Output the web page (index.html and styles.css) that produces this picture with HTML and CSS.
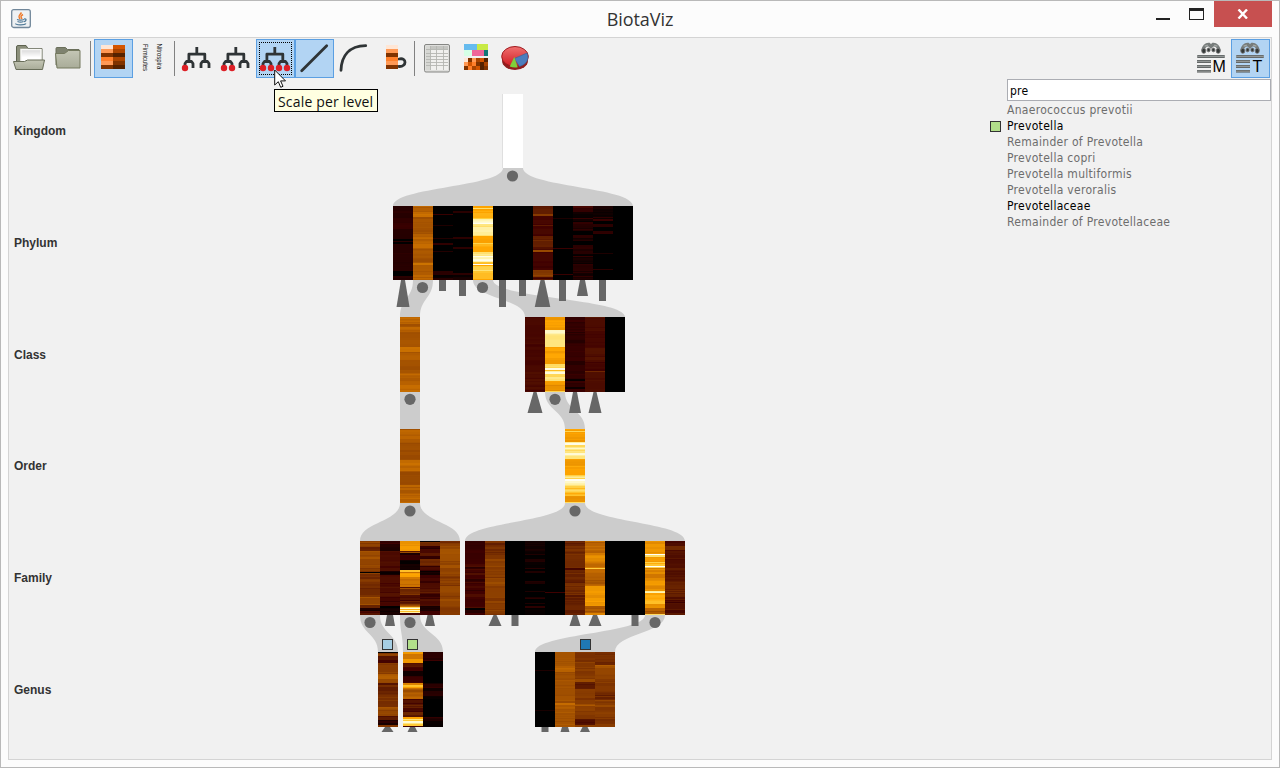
FILE: index.html
```html
<!DOCTYPE html>
<html lang="en">
<head>
<meta charset="utf-8">
<title>BiotaViz</title>
<link rel="stylesheet" href="styles.css">
</head>
<body>
<svg width="0" height="0" class="defs">
  <defs>
    <linearGradient id="olive" x1="0" y1="0" x2="0" y2="1"><stop offset="0" stop-color="#c4c6b5"/><stop offset="1" stop-color="#a9ac99"/></linearGradient>
    <linearGradient id="paper" x1="0" y1="0" x2="0" y2="1"><stop offset="0" stop-color="#d8d8d8"/><stop offset=".6" stop-color="#fff"/></linearGradient>
    <linearGradient id="bar" x1="0" y1="0" x2="0" y2="1"><stop offset="0" stop-color="#555a5a"/><stop offset=".5" stop-color="#929695"/><stop offset="1" stop-color="#4c5050"/></linearGradient>
    <linearGradient id="pie" x1="0" y1="0" x2="0" y2="1"><stop offset="0" stop-color="#f07070"/><stop offset="1" stop-color="#d01c22"/></linearGradient>
    <g id="tree" fill="none" stroke="#2f3436" stroke-width="2.8" stroke-linejoin="round">
      <path d="M18.8 8v7M10.900 22.500v-7.300h15.900v7.300M7 29v-4.500l1.500-2h5l1.500 2v4.500M23 29v-4.500l1.500-2h5l1.500 2v4.500"/>
    </g>
    <g id="binoculars">
      <g transform="translate(3.800 .5) scale(.8 .95)">
        <path d="M8.500 12c1-4 4-7 8-6.600l2.500 2 2.500-2c4-.4 7 2.600 8 6.600" fill="none" stroke="#777c7b" stroke-width="4"/>
        <path d="M11 7l4-1M23 6l4 1" stroke="#a4a8a5" stroke-width="1.500"/>
        <circle cx="10" cy="12" r="2.600" fill="#333837" stroke="#777"/><circle cx="16" cy="11" r="2" fill="#333837" stroke="#777"/>
        <circle cx="22" cy="11" r="2" fill="#333837" stroke="#777"/><circle cx="28" cy="12" r="2.600" fill="#333837" stroke="#777"/>
      </g>
      <rect x="5" y="16" width="28" height="3" rx="1" fill="url(#bar)"/>
      <rect x="5" y="21" width="14" height="3" fill="url(#bar)"/><rect x="5" y="26" width="14" height="3" fill="url(#bar)"/><rect x="5" y="31" width="14" height="2.500" fill="url(#bar)"/>
    </g>
  </defs>
</svg>
<div class="window">
  <header class="titlebar">
    <svg class="app-icon" width="20" height="20" viewBox="0 0 20 20">
      <rect x=".7" y=".7" width="18.600" height="17.800" rx="2" fill="#eef1f3" stroke="#71879a" stroke-width="1.300"/>
      <path d="M10.500 3.500c-1.500 2.500-4 3-1.500 6.500M12 5.500c-2.500 1.500-2.500 2-1 4.500" fill="none" stroke="#ee7b2d" stroke-width="1.500"/>
      <path d="M6 10.500c2 .8 5 .8 7 0M13 10c3-.5 2.500 2 0 2.800M6.500 12.500c2 .8 4 .8 6 0M4.500 14.500c0 1.500 9 2 10.500 0" fill="none" stroke="#4e7896" stroke-width="1.200"/>
    </svg>
    <h1 class="title">BiotaViz</h1>
    <div class="controls">
      <svg width="15" height="18" viewBox="0 0 15 18"><rect x="1" y="16" width="14" height="2" fill="#222"/></svg>
      <svg class="maximize" width="15" height="13" viewBox="0 0 15 13"><path d="M0 0h15v12H0zM1 3v8h13V3z" fill="#222" fill-rule="evenodd"/></svg>
      <div class="close"><svg width="12" height="10" viewBox="0 0 12 10"><path d="M1.500.5l8.500 9M10 .5l-8.500 9" stroke="#fff" stroke-width="2.400"/></svg></div>
    </div>
  </header>

  <main class="frame">
    <nav class="toolbar">
      <div class="tool"><svg viewBox="0 0 39 39">
        <path d="M7.500 24V8q0-1.500 1.500-1.500h8l2 3h14V24z" fill="#8b8f7b" stroke="#5d624f"/>
        <rect x="12" y="10.500" width="20" height="13" fill="url(#paper)" stroke="#f8f8f6" stroke-width="1.500"/>
        <path d="M4.500 22.500h11l3-1.500h17l-2 9.500H7z" fill="url(#olive)" stroke="#686d59" stroke-linejoin="round"/>
      </svg></div>
      <div class="tool"><svg viewBox="0 0 39 39">
        <path d="M8 26V9.500q0-1 1-1h8.500l2 2H31V27z" fill="#7e826f" stroke="#6a6f5b"/>
        <path d="M7.500 14.500h9l4-3h11.500v17.500h-23z" fill="url(#olive)" stroke="#74795f" stroke-linejoin="round"/>
      </svg></div>
      <i class="sep wide"></i>
      <div class="tool on"><svg id="heat-icon" viewBox="0 0 39 39" shape-rendering="crispEdges"></svg></div>
      <div class="tool"><svg viewBox="0 0 39 39">
        <text class="tiny" transform="translate(9.700 5) rotate(90)" textLength="27" lengthAdjust="spacingAndGlyphs">Firmicutes</text>
        <text class="tiny" transform="translate(23.700 4.500) rotate(90)" textLength="26" lengthAdjust="spacingAndGlyphs">Nitrospira</text>
      </svg></div>
      <i class="sep"></i>
      <div class="tool"><svg viewBox="0 0 39 39"><use href="#tree"/><circle cx="7" cy="29" r="3.200" class="red"/></svg></div>
      <div class="tool"><svg viewBox="0 0 39 39"><use href="#tree"/><circle cx="7" cy="29" r="3.200" class="red"/><circle cx="15" cy="29" r="3.200" class="red"/></svg></div>
      <div class="tool on"><svg viewBox="0 0 39 39"><use href="#tree"/><circle cx="7" cy="29" r="3.200" class="red"/><circle cx="15" cy="29" r="3.200" class="red"/><circle cx="23" cy="29" r="3.200" class="red"/><circle cx="31" cy="29" r="3.200" class="red"/>
        <path d="M3 3.500h33M3 35.500h33M3.500 5v30M35.500 5v30" fill="none" stroke="#000" stroke-dasharray="1 1" shape-rendering="crispEdges"/></svg></div>
      <div class="tool on"><svg viewBox="0 0 39 39"><path d="M6.700 31.700l25-25" class="ink"/></svg></div>
      <div class="tool"><svg viewBox="0 0 39 39"><path d="M7 31.300C7.500 17 15 7 31.700 6.700" class="ink"/></svg></div>
      <div class="tool"><svg id="mug-icon" viewBox="0 0 39 39"><path d="M26 20c8-2 8 8 0 7.500" class="ink"/></svg></div>
      <i class="sep"></i>
      <div class="tool"><svg viewBox="0 0 39 39">
        <rect x="6.500" y="5.500" width="25" height="27.500" rx="1.500" fill="#dededc" stroke="#858683"/>
        <rect x="8" y="7" width="22" height="24" fill="#f0f0ee"/><rect x="8" y="7" width="22" height="3.500" fill="#c4c5c1"/><rect x="8" y="7" width="4.500" height="24" fill="#d6d7d3"/>
        <path d="M8 10.500h22M8 14.500h22M8 17.500h22M8 20.500h22M8 23.500h22M8 26.500h22M12.500 7v24M18.500 7v24M25.500 7v24" stroke="#b4b5b1" stroke-width=".9"/>
      </svg></div>
      <div class="tool"><svg id="mosaic-icon" viewBox="0 0 39 39" shape-rendering="crispEdges"></svg></div>
      <div class="tool"><svg viewBox="0 0 39 39">
        <ellipse cx="19" cy="21.500" rx="13" ry="9.500" fill="#8f1e1e"/>
        <ellipse cx="19" cy="17.500" rx="13.300" ry="10" fill="url(#pie)" stroke="#a01a1e"/>
        <path d="M18.300 19.500L31 14c2.500 6 0 11-7.500 13.500z" fill="#4c7dbd" stroke="#375f96" stroke-width=".6"/>
        <path d="M18.300 18l3.400 10.200q-4 .8-8-.6z" fill="#7fd03a"/>
      </svg></div>
      <div class="tool first-right"><svg viewBox="0 0 39 39"><use href="#binoculars"/><text class="letter" x="20.500" y="33" textLength="12.500">M</text></svg></div>
      <div class="tool on"><svg viewBox="0 0 39 39"><use href="#binoculars"/><text class="letter" x="21.500" y="33">T</text></svg></div>
    </nav>

    <div class="pointer-layer">
      <span class="tooltip">Scale per level</span>
      <svg class="cursor" width="13" height="20" viewBox="0 0 13 20"><path d="M.7 1v15l3.600-3.300 2.400 5.600 2.300-1-2.400-5.400h4.900z" fill="#fff" stroke="#111" stroke-width="1"/></svg>
    </div>

    <section class="workspace">
      <div class="levels"><span>Kingdom</span><span>Phylum</span><span>Class</span><span>Order</span><span>Family</span><span>Genus</span></div>
      <svg id="tree-map" width="340" height="680" viewBox="350 79 340 680"></svg>
      <aside class="search">
        <input class="query" value="pre">
        <ul class="results">
          <li>Anaerococcus prevotii</li>
          <li class="match marked">Prevotella</li>
          <li>Remainder of Prevotella</li>
          <li>Prevotella copri</li>
          <li>Prevotella multiformis</li>
          <li>Prevotella veroralis</li>
          <li class="match">Prevotellaceae</li>
          <li>Remainder of Prevotellaceae</li>
        </ul>
      </aside>
    </section>
  </main>
</div>
<script src="chart.js"></script>
</body>
</html>
```
FILE: styles.css
```css
*, ::before { box-sizing: border-box; }
body { margin: 0; overflow: hidden; }
.defs { position: absolute; }
.window { width: 1280px; height: 768px; border: 1px solid #b9b9b9; background: #fcfcfc; padding: 0 7px 7px; display: flex; flex-direction: column; }
.titlebar { height: 36px; flex: none; display: grid; grid-template-columns: 1fr auto 1fr; align-items: start; }
.app-icon { margin: 8px 0 0 3px; }
.title { margin: 5px 0 0; font: 400 18px/27px "Open Sans", sans-serif; letter-spacing: -.05px; color: #333; }
.controls { display: flex; justify-content: flex-end; align-items: flex-start; margin-right: 0; }
.controls .maximize { margin: 7px 10px 0 19px; }
.controls > svg:first-child { margin-top: 1px; }
.close { width: 58px; height: 26px; background: #c75050; display: flex; justify-content: center; align-items: center; }
.frame { flex: 1; border: 1px solid #d4d4d4; background: #f1f1f1; position: relative; display: flex; flex-direction: column; }
.toolbar { display: flex; height: 41px; padding: 1px 1px 0 1px; flex: none; }
.tool { width: 39px; height: 39px; flex: none; }
.tool:first-child { margin-left: -1px; }
.tool svg { display: block; width: 39px; height: 39px; }
.tool.on { background: #b2d4f3; box-shadow: inset 0 0 0 1px #5b9fe2; }
.first-right { margin-left: auto; }
.sep { width: 6px; height: 35px; margin-top: 2px; flex: none; background: linear-gradient(#818181, #818181) 2px 0 / 1px 100% no-repeat; }
.sep.wide { width: 7px; background-position: 3px 0; }
.red { fill: #dd1f26; }
.ink { fill: none; stroke: #2f3436; stroke-width: 2.8; stroke-linecap: round; }
.tiny { font: 6.5px "Liberation Sans", sans-serif; fill: #111; }
.letter { font: 16px "Liberation Sans", sans-serif; fill: #000; }
.pointer-layer { position: absolute; left: 265px; top: 31px; z-index: 2; }
.tooltip { position: absolute; left: 0; top: 20px; width: 104px; height: 23px; border: 1px solid #000; background: #ffffe1; font: 14px/24px "Open Sans", sans-serif; letter-spacing: .17px; white-space: nowrap; padding-left: 3px; color: #111; }
.cursor { position: absolute; left: 0; top: 0; }
.workspace { flex: 1; display: flex; min-height: 0; }
.levels { width: 341px; padding: 0 0 0 5px; flex: none; font: bold 12px/104px "Liberation Sans", sans-serif; color: #333; display: grid; grid-template-rows: repeat(6, 111.8px); }
#tree-map { flex: none; display: block; }
.search { width: 281px; margin-left: auto; padding-left: 17px; font: 12px "DejaVu Sans Condensed", "DejaVu Sans", sans-serif; font-stretch: condensed; letter-spacing: .3px; }
.query { display: block; width: 264px; height: 22px; border: 1px solid #abadb3; background: #fff; padding: 1px 2px 0; font: inherit; letter-spacing: .2px; color: #000; outline: none; }
.results { list-style: none; margin: 1px 0 0; padding: 0; color: #6d6d6d; line-height: 16px; }
.match { color: #000; }
.marked { display: flex; align-items: center; margin-left: -17px; }
.marked::before { content: ""; width: 11px; height: 11px; margin-right: 6px; border: 1px solid #333; background: #b2df8a; }
```
FILE: chart.js
```javascript
const NS = "http://www.w3.org/2000/svg";
function add(parent, tag, attrs) {
  const el = document.createElementNS(NS, tag);
  for (const k in attrs) el.setAttribute(k, attrs[k]);
  parent.appendChild(el);
}

/* Heat ramp: 0 is absent, 12 is the most abundant. */
const ramp = [[0,0,0],[36,0,0],[64,0,0],[88,22,0],[122,48,0],[156,76,0],[200,110,0],[234,146,0],[255,165,0],[255,205,60],[255,229,125],[255,246,185],[255,255,250]];
function heat(v) {
  const i = Math.min(11, Math.floor(v)), t = Math.min(1, v - i);
  return `rgb(${ramp[i].map((c, k) => Math.round(c + (ramp[i + 1][k] - c) * t)).join()})`;
}

/* Column: "end:low-high ..." gives the value range of the samples down to row `end`. */
const groups = [
  { x: 393, y: 206, h: 74, cols: [
    "5:1-1.1 7:1.2-1.4 12:1-1.1 17:1.2-1.5 23:1.6-1.8 33:1-1.1 35:0-0 36:1.2-1.3 38:0-0 47:1-1.2 54:1-1.4 65:1-1.2 70:0-0 74:.6-1.5",
    "8:5.2-6 11:6-6.2 28:5-5.5 32:5.4-5.9 42:5-6 57:5-5.6 59:6-6.3 66:5.1-5.6 74:5-6.1",
    "8:0-0 9:1.6-1.7 19:0-0 20:.8-.9 32:0-0 33:.8-1 37:0-0 39:1.4-1.5 45:0-0 46:.9-1 65:0-0 69:1-1.4 72:0-.7 74:1-1.2",
    "5:0-0 7:1-1.3 31:0-0 33:1.1-1.4 41:0-0 43:1.2-1.3 67:0-0 69:1.1-1.4 71:0-.5 74:.5-1.5",
    "2:7.8-8 3:9-10 12:7.5-8.5 13:9-9 18:10.5-12 21:9.5-10.5 24:10-11.8 30:9.6-11 37:7.5-8.2 38:9-9.5 46:7.6-8.5 50:9.5-11 56:10.5-12 58:8-9 59:12-12 60:8-8 65:8.5-10.5 67:8-9 74:7.4-8.7",
    "74:0-0", "74:0-0",
    "3:3-3.5 8:3.1-3.7 10:4.2-4.5 19:1.7-2.7 20:3-3.5 30:1.8-2.4 35:3-4 43:2.1-3.4 44:2.3-2.5 46:4.4-5.2 64:1.7-2.5 71:3.5-4.8 74:2-3.2",
    "12:0-0 13:.7-.8 42:0-0 43:1.7-1.8 68:0-0 69:1.7-1.8 74:0-0",
    "2:2-2.4 6:1.3-1.6 12:0-.5 13:1.6-1.7 16:0-.6 18:1-1.7 25:.4-1.5 29:0-0 32:1-1.4 35:.3-1.2 39:0-0 43:1-1.6 48:0-1.4 50:.1-.3 51:1.5-1.6 58:0-.9 65:1-1.4 74:.1-1.5",
    "11:0-.8 12:1.2-1.5 13:.3-.4 15:1.5-1.8 18:0-0 21:1.2-1.6 25:0-0 28:1-1.7 47:0-0 48:.8-.9 63:0-0 64:1.2-1.4 74:0-0", "74:0-0"] },
  { x: 400, y: 317, h: 75, cols: ["7:5.4-6.1 15:5-6 30:5-5.5 35:6-6.2 43:5.2-5.8 56:5-5.4 67:5.2-5.9 75:5.6-6.2"] },
  { x: 525, y: 317, h: 75, cols: [
    "8:2-3 28:2-2.5 55:2-2.5 75:2-3",
    "3:7-8 9:7.5-8.2 13:6.8-8 17:10.5-12 30:9.6-10.3 47:7.2-8.4 51:9-10 53:11-12 54:8.5-9 57:10.5-12 60:8.5-10 64:8.5-10.5 68:7.1-8 74:6.5-7.6 75:9-9.5",
    "13:1.1-2 27:1-1.8 44:1.4-1.9 62:1-1.9 64:0-.4 70:1-1.8 72:0-.5 75:1.5-2",
    "14:2.2-2.9 30:2-2.6 45:2.3-3.1 54:1.9-2.4 55:3.6-3.8 75:2.2-2.8", "75:0-0"] },
  { x: 400, y: 429, h: 74, cols: ["14:5.1-6 31:4.8-5.3 42:5.5-6.2 56:4.8-5.3 67:5.2-5.8 74:5.4-6.1"] },
  { x: 565, y: 429, h: 74, cols: ["2:7-8 3:9-10 13:6.8-8.3 14:10.5-11 16:11.5-12 19:9-10.5 20:11-11.5 24:9.3-10.5 27:10.5-12 30:9.5-10.5 37:6.7-8 46:7.5-8.3 50:8.2-10.5 52:11.7-12 56:10.3-11.4 64:8-10.3 67:8-8.8 73:6.4-7.7 74:9-10"] },
  { x: 360, y: 541, h: 74, cols: [
    "6:4-5.2 10:2-4 24:4.5-5.4 30:4-5 31:4-4 32:0-0 43:3-5 56:2.8-4.8 64:4.5-5.5 67:3-4 70:0-1 74:1.5-3",
    "3:1-2.5 6:.5-2 10:.5-1 27:2-3 30:2-3 34:0-1 52:2-3 65:1.5-3 70:0-.7 74:0-1",
    "5:6.8-7.5 10:6.5-8 11:3-3 12:5-5 14:.5-1 19:1.5-3 26:0-1 29:.3-1 31:7.5-10 32:6-6 36:7-9 46:5.5-6.5 54:2.5-5.5 64:0-4.5 66:4-7 67:9-10 68:11.5-12 69:8-9 70:11-12 71:8-9 72:10-11 74:1.8-2",
    "1:0-.5 5:3-5 8:0-2 15:2-4 18:1-2 25:3-4.5 30:1-3.5 34:0-1.5 42:1.5-3 52:2-3.7 58:1.4-3 65:2-3.2 70:0-1 74:0-3",
    "3:3.5-4.4 8:4.2-5.2 19:4.8-5.4 34:4.3-5.2 45:3.8-5 54:4.5-5.2 65:4-5.2 71:3.7-4.7 74:4-5"] },
  { x: 465, y: 541, h: 74, cols: [
    "10:1-2 18:1.5-2 26:1.6-3 43:1-3 56:1-3 65:1.7-2.1 67:2-3 72:0-1.5 74:1.5-2.5",
    "14:3.3-4.2 41:4-5 43:4.8-5.6 60:4-4.8 74:3.8-5", "74:0-0",
    "5:.2-1 10:0-1 13:0-.5 14:.8-.9 18:0-.2 21:.8-1.1 27:0-.3 28:1-1.2 30:0-0 32:.7-1 40:0-0 43:.7-1 50:0-0 51:.8-1 56:0-0 58:.6-1.6 62:0-0 63:.8-.9 65:0-0 67:1-1.4 74:0-.3",
    "51:0-0 52:1.8-2 74:0-0",
    "27:3-4.2 29:2-2.5 42:2.6-4 52:3.2-4.5 65:2.5-4.2 74:2.8-4",
    "12:5-6.4 20:6-7.2 27:5.5-7 28:9-10 32:5.5-6.5 45:5-6 65:6.6-8 72:4.8-6 74:6-7",
    "74:0-0", "74:0-0",
    "3:6.5-7.4 13:6.7-7.8 14:12-12 16:9.5-10 21:7-8 22:9-10 25:8-10.5 26:12-12 27:9-10 39:5.8-7.2 50:6-8 52:10-11 63:7.5-8.8 67:6-8 73:4.8-6 74:9.5-10",
    "5:2-3 30:2-3.7 40:2.5-3.2 55:3-3.8 74:1.8-3.6"] },
  { x: 378, y: 652, h: 75, cols: ["1:0-0 4:4-5 8:2-5 11:1.5-3 22:4-5 27:5-5.6 31:4.5-5 33:2.7-2.9 43:2.5-4.8 55:3.8-4.6 64:4.3-5.8 68:2-3.5 73:0-1.7 75:2-5.5"] },
  { x: 403, y: 652, h: 75, cols: [
    "2:7-8 7:5-6.8 11:6.5-8 15:1-4 19:1.5-2.4 29:0-3 31:.5-3.4 33:6.5-6.7 36:7-9 47:4.8-6.5 54:1.4-4 65:1.3-4.5 67:7-9 68:10-10 69:8.5-9 71:10.5-12 72:10-10 74:8.5-10 75:2-2",
    "8:.6-1.5 9:1.8-2 31:0-0 44:.3-2 47:0-1 65:0-0 67:.6-1.5 72:0-1.4 75:0-.3"] },
  { x: 535, y: 652, h: 75, cols: [
    "18:0-0 19:.8-.9 58:0-0 59:.6-.8 75:0-0",
    "14:4.8-5.4 18:5.5-6 26:4.6-5.7 51:4.9-5.4 53:5.6-6.1 75:4.8-5.8",
    "10:3.6-4.5 26:3.7-5 30:3.6-5 37:2.6-3.8 52:4-4.8 59:4-5.7 67:3.8-4.8 73:2-3.4 75:4-5",
    "13:3.4-4.4 16:4.7-5.5 27:4.3-5 40:3.7-4.6 48:3-4.4 65:4-4.9 75:3.6-4.7"] }
];

const map = document.getElementById("tree-map");

/* Ribbons: parent left, right, bottom, then children left, right, top. */
[[503,523,168,393,633,206],[413,433,280,400,420,317],[473,493,280,525,625,317],[400,420,392,400,420,429],[545,565,392,565,585,429],
 [400,420,503,360,460,541],[565,585,503,465,685,541],[360,380,615,378,398,652],[400,420,615,403,443,652],[645,665,615,535,615,652]
].forEach(([a, b, y0, c, d, y1]) => {
  const m = (y0 + y1) / 2;
  add(map, "path", { fill: "#cccccc", d: `M${a} ${y0}C${a} ${m} ${c} ${m} ${c} ${y1}H${d}C${d} ${m} ${b} ${m} ${b} ${y0}Z` });
});

add(map, "rect", { x: 502, y: 94, width: 1, height: 74, fill: "#dfdfdf" });
add(map, "rect", { x: 503, y: 94, width: 20, height: 74, fill: "#fff" });

let seed = 7;
const random = () => (seed = (seed * 16807) % 2147483647) / 2147483647;
groups.forEach(g => g.cols.forEach((col, i) => {
  add(map, "rect", { x: g.x + i * 20, y: g.y, width: 20, height: g.h, fill: "#000", "shape-rendering": "crispEdges" });
  let row = 0;
  col.split(" ").forEach(run => {
    const [end, range] = run.split(":"), [lo, hi] = range.split("-").map(Number);
    let v = lo + (hi - lo) * random();
    for (; row < +end; row++) {
      if (random() > .4) v = lo + (hi - lo) * (random() + random()) / 2;
      if (v > 0) add(map, "rect", { x: g.x + i * 20, y: g.y + row, width: 20, height: 1, fill: heat(v), "shape-rendering": "crispEdges" });
    }
  });
}));

/* Collapsed subtrees: centre, top, top width, bottom width, height. */
[[403,280,4,13,27],[442.5,280,7,7,11],[462.5,280,7,7,16],[502.5,280,7,7,27],[522.5,280,7,7,16],[542.5,280,4,15.5,27],[562.5,280,7,7,21],[582.5,280,5,11,16],[602.5,280,7,7,21],
 [535,392,3,15,21],[575,392,4,12,21],[595,392,3,13,21],
 [390,615,6,10,11],[430,615,5,10,11],[495,615,3,13,11],[515,615,7,7,11],[575,615,4,11,11],[595,615,4,13,11],[635,615,7,7,11],
 [387.5,727,5,12,5],[412.5,727,5,10,5],[545,727,7,7,5],[565,727,6,9,5],[585,727,5,10,5]
].forEach(([x, y, a, b, h]) => add(map, "path", { fill: "#676767", d: `M${x - a / 2} ${y}h${a}L${x + b / 2} ${y + h}h${-b}z` }));

[[512.5,176],[422.5,287.5],[482.5,287.5],[410,399.3],[555,399.3],[410,511],[575,511],[370,622.5],[410,622.5],[655,622.5]]
  .forEach(([cx, cy]) => add(map, "circle", { cx, cy, r: 5.6, fill: "#676767" }));

[[382.5,"#a6cee3"],[407.5,"#b2df8a"],[580.5,"#1f78b4"]]
  .forEach(([x, fill]) => add(map, "rect", { x, y: 639.5, width: 10, height: 10, fill, stroke: "#333" }));

/* Toolbar icons made of colour cells. */
const L = ["#ffe6d5", "#ff9955", "#803300", "#ff7f2a", "#ff9955", "#803300"];
const R = ["#d45500", "#aa4400", "#552200", "#aa4400", "#803300", "#552200"];
const cell = (id, x, y, width, height, fill) => add(document.getElementById(id), "rect", { x, y, width, height, fill });
L.forEach((c, i) => {
  cell("heat-icon", 7, 6 + i * 4, 12, 4, c);
  cell("heat-icon", 19, 6 + i * 4, 12, 4, R[i]);
  cell("mug-icon", 13, 6 + i * 4, 12, 4, c);
});
[[7,5,13,6,"#66bbee"],[20,5,11,6,"#c8ea45"],[7,11,8,6,"#d5ffe6"],[15,11,12,6,"#ee6699"],[27,11,4,6,"#117777"]].forEach(r => cell("mosaic-icon", ...r));
["#ffe6d5 #803300 #ff9955 #aa4400 #d45500 #552200", "#ff9955 #d45500 #ff7f2a #803300 #552200 #aa4400", "#803300 #ff7f2a #aa4400 #d45500 #552200 #803300"]
  .forEach((line, r) => line.split(" ").forEach((c, i) => cell("mosaic-icon", 7 + i * 4, 19 + r * 4, 4, 4, c)));
```
